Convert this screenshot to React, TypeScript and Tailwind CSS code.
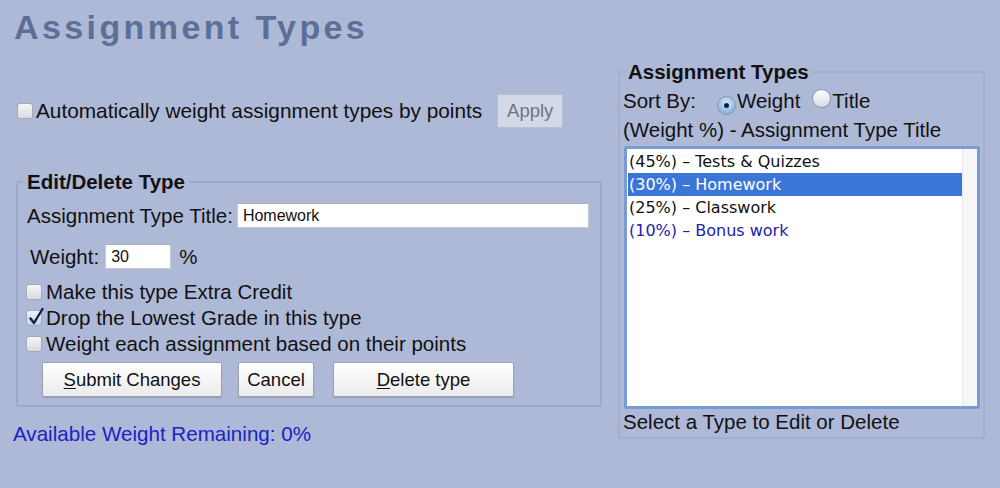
import type { FC } from 'react';

const SANS = { fontFamily: '"Liberation Sans", Arial, Helvetica, sans-serif' };

const CheckBox: FC<{ checked?: boolean }> = ({ checked = false }) => (
  <span
    className={`relative inline-flex h-[16px] w-[16px] shrink-0 rounded-[3px] border border-[#a4a9b5] ${
      checked
        ? 'bg-gradient-to-b from-[#eef4fd] to-[#bcd0ee]'
        : 'bg-gradient-to-b from-[#f6f6f7] to-[#d9dbe1]'
    }`}
  >
    {checked && (
      <svg aria-hidden="true" viewBox="0 0 16 18" className="absolute -top-[4px] left-[1px] h-[19px] w-[16px]">
        <path
          d="M2.5 11 6 15.5 14.5 1.5"
          fill="none"
          stroke="#16213d"
          strokeWidth="2.4"
          strokeLinecap="round"
          strokeLinejoin="round"
        />
      </svg>
    )}
  </span>
);

const Radio: FC<{ checked?: boolean }> = ({ checked = false }) => (
  <span
    className={`inline-flex h-[19px] w-[19px] shrink-0 items-center justify-center rounded-full border border-[#8d95a6] ${
      checked
        ? 'bg-[radial-gradient(circle_at_50%_35%,#d6e7fa,#6f9fdb)]'
        : 'bg-gradient-to-b from-white to-[#d8dbe2]'
    }`}
  >
    {checked && <span className="h-[5px] w-[5px] rounded-full bg-[#18202f]" />}
  </span>
);

const Button: FC<{ width: string; label: string; hotkey?: boolean }> = ({ width, label, hotkey }) => (
  <button
    type="button"
    className={`${width} h-[35px] rounded-[2px] border border-[#9ea1a8] bg-gradient-to-b from-white to-[#ebebec] text-[18.5px] text-[#111] shadow-[0_1px_1px_rgba(0,0,0,0.15)]`}
  >
    {hotkey ? (
      <>
        <span className="underline underline-offset-2">{label[0]}</span>
        {label.slice(1)}
      </>
    ) : (
      label
    )}
  </button>
);

const TYPES = [
  { id: 'tests', label: '(45%) – Tests & Quizzes', tone: 'text-[#111]' },
  { id: 'homework', label: '(30%) – Homework', tone: 'text-white bg-[#3a76d8]' },
  { id: 'classwork', label: '(25%) – Classwork', tone: 'text-[#111]' },
  { id: 'bonus', label: '(10%) – Bonus work', tone: 'text-[#2323a8]' },
];

export default function App() {
  return (
    <div className="flex h-[488px] w-[1000px] overflow-hidden bg-[#aeb9d7] text-[20.5px] text-[#111]" style={SANS}>
      {/* left column */}
      <div className="flex w-[602px] shrink-0 flex-col">
        <h1 className="ml-[14px] mt-[10px] text-[34px] font-bold leading-[34px] tracking-[3.4px] text-[#5e6f97]">
          Assignment Types
        </h1>

        <div className="ml-[17px] mt-[50px] flex h-[34px] items-center">
          <CheckBox />
          <span className="ml-[3px] text-[20.8px] leading-[24px]">Automatically weight assignment types by points</span>
          <button
            type="button"
            className="ml-[15px] h-[34px] w-[66px] border border-[#b7bfd2] bg-[#d3d9e8] text-[18.5px] text-[#6f7482]"
          >
            Apply
          </button>
        </div>

        <fieldset className="ml-[16px] mt-[42px] w-[586px] rounded-[3px] border-2 border-[#9caacb] pb-[8px]">
          <legend className="ml-[5px] px-[4px] font-bold leading-[23px]">Edit/Delete Type</legend>

          <div className="ml-[9px] mt-[10px] flex h-[25px] items-center">
            <span className="leading-[24px]">Assignment Type Title:</span>
            <input
              readOnly
              value="Homework"
              className="ml-[4px] h-[25px] w-[352px] border border-[#c4c8d1] border-t-[#a9adb7] bg-white px-[5px] text-[16px] text-[#111] outline-none"
              style={SANS}
            />
          </div>

          <div className="ml-[12px] mt-[16px] flex h-[25px] items-center">
            <span className="leading-[24px]">Weight:</span>
            <input
              readOnly
              value="30"
              className="ml-[6px] h-[25px] w-[66px] border border-[#c4c8d1] border-t-[#a9adb7] bg-white px-[5px] text-[16px] text-[#111] outline-none"
              style={SANS}
            />
            <span className="ml-[8px] leading-[24px]">%</span>
          </div>

          <div className="ml-[8px] mt-[10px] flex flex-col">
            <label className="flex h-[26px] items-center">
              <CheckBox />
              <span className="ml-[4px] leading-[24px]">Make this type Extra Credit</span>
            </label>
            <label className="flex h-[26px] items-center">
              <CheckBox checked />
              <span className="ml-[4px] leading-[24px]">Drop the Lowest Grade in this type</span>
            </label>
            <label className="flex h-[26px] items-center">
              <CheckBox />
              <span className="ml-[4px] leading-[24px]">Weight each assignment based on their points</span>
            </label>
          </div>

          <div className="ml-[24px] mt-[5px] flex gap-[16px]">
            <Button width="w-[180px]" label="Submit Changes" hotkey />
            <Button width="w-[76px]" label="Cancel" />
            <div className="ml-[3px]">
              <Button width="w-[181px]" label="Delete type" hotkey />
            </div>
          </div>
        </fieldset>

        <p className="ml-[13px] mt-[15px] text-[20.6px] leading-[24px] text-[#1d22c4]">Available Weight Remaining: 0%</p>
      </div>

      {/* right column */}
      <fieldset className="ml-[16px] mt-[60px] h-[379px] w-[367px] shrink-0 rounded-[3px] border-2 border-[#a3afce] px-[3px]">
        <legend className="ml-[2px] px-[3px] font-bold leading-[23px]">Assignment Types</legend>

        <div className="flex h-[36px] items-center">
          <span className="leading-[24px]">Sort By:</span>
          <span className="ml-[21px]">
            <Radio checked />
          </span>
          <span className="ml-[1px] leading-[24px]">Weight</span>
          <span className="ml-[12px]">
            <Radio />
          </span>
          <span className="ml-[1px] leading-[24px]">Title</span>
        </div>

        <div className="h-[22px] leading-[22px]">(Weight %) - Assignment Type Title</div>

        <div className="ml-[1px] mt-[5px] flex h-[263px] w-[356px] rounded-[2px] border-[3px] border-[#789bd6] bg-white">
          <ul className="flex-1 pt-[1px]" style={{ fontFamily: '"DejaVu Sans", Verdana, sans-serif' }}>
            {TYPES.map(item => (
              <li key={item.id} className={`ml-[1px] h-[23px] pl-[1px] text-[16px] leading-[23px] ${item.tone}`}>
                {item.label}
              </li>
            ))}
          </ul>
          <div className="w-[15px] border-l border-[#e6e6e6] bg-[#f6f6f6]" />
        </div>

        <div className="mt-[1px] h-[24px] leading-[24px]">Select a Type to Edit or Delete</div>
      </fieldset>
    </div>
  );
}
